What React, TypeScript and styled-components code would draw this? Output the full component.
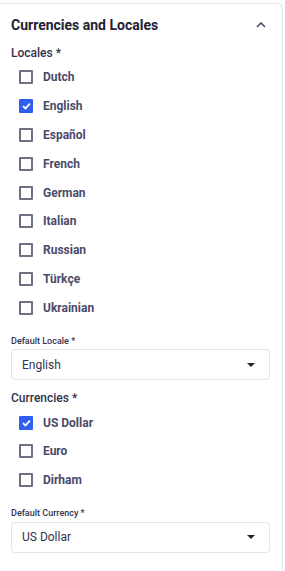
import React, { useState } from 'react'
import styled, { createGlobalStyle } from 'styled-components'

const GlobalStyle = createGlobalStyle`
  html, body {
    margin: 0;
    padding: 0;
    background: #ffffff;
    font-family: Roboto, 'Noto Sans', sans-serif;
    overflow: hidden;
  }
`

const Page = styled.div`
  padding: 3px 2px 0 0;
  margin-left: -10px;
`

const Card = styled.section`
  border: 1px solid #e3e3e6;
  border-bottom: none;
  border-radius: 0 6px 0 0;
  padding: 10px 12px 30px 20px;
  background: #fff;
`

const Header = styled.div`
  display: flex;
  align-items: center;
  justify-content: space-between;
  height: 22px;
  margin-bottom: 9px;
`

const Title = styled.h2`
  margin: 0;
  font-size: 14px;
  font-weight: 700;
  color: #212134;
`

const Toggle = styled.button`
  border: none;
  background: none;
  padding: 0;
  width: 16px;
  height: 16px;
  display: flex;
  align-items: center;
  justify-content: center;
  margin-right: 1px;
  cursor: pointer;
`

const GroupLabel = styled.div`
  font-size: 12px;
  font-weight: 500;
  color: #32324d;
  height: 16px;
  line-height: 16px;
`

const CheckList = styled.div`
  display: flex;
  flex-direction: column;
  padding: 2px 0 0 8px;
`

const CheckRow = styled.label`
  display: flex;
  align-items: center;
  gap: 10px;
  height: 28.8px;
  cursor: pointer;
`

const Box = styled.span<{ $checked: boolean }>`
  width: 14px;
  height: 14px;
  box-sizing: border-box;
  border-radius: 1px;
  border: ${(p) => (p.$checked ? 'none' : '2px solid #6e6e84')};
  background: ${(p) => (p.$checked ? '#2e5ff0' : '#fff')};
  display: flex;
  align-items: center;
  justify-content: center;
`

const CheckText = styled.span`
  font-size: 12px;
  font-weight: 700;
  color: #4a4a6a;
`

const FieldLabel = styled.div`
  font-size: 9px;
  font-weight: 500;
  color: #32324d;
  margin-top: 12px;
  margin-bottom: 3px;
`

const SelectBox = styled.div`
  height: 31px;
  box-sizing: border-box;
  border: 1px solid #e3e3e8;
  border-radius: 4px;
  display: flex;
  align-items: center;
  justify-content: space-between;
  padding: 0 14px 0 10px;
  font-size: 12px;
  color: #32324d;
`

const Caret = styled.span`
  width: 0;
  height: 0;
  border-left: 4px solid transparent;
  border-right: 4px solid transparent;
  border-top: 4px solid #212134;
`

const Spacer = styled.div<{ $h: number }>`
  height: ${(p) => p.$h}px;
`

const locales = ['Dutch', 'English', 'Español', 'French', 'German', 'Italian', 'Russian', 'Türkçe', 'Ukrainian']
const currencies = ['US Dollar', 'Euro', 'Dirham']

function Check({ label, checked, onToggle }: { label: string; checked: boolean; onToggle: () => void }) {
  return (
    <CheckRow onClick={onToggle}>
      <Box $checked={checked}>
        {checked && (
          <svg width='9' height='8' viewBox='0 0 9 8'>
            <path d='M1 4.2 L3.4 6.4 L8 1.6' stroke='#fff' strokeWidth='1.8' fill='none' />
          </svg>
        )}
      </Box>
      <CheckText>{label}</CheckText>
    </CheckRow>
  )
}

export default function App() {
  const [selLocales, setSelLocales] = useState<string[]>(['English'])
  const [selCurrencies, setSelCurrencies] = useState<string[]>(['US Dollar'])

  const flip = (list: string[], set: (v: string[]) => void, v: string) =>
    set(list.includes(v) ? list.filter((x) => x !== v) : [...list, v])

  return (
    <>
      <GlobalStyle />
      <Page>
        <Card>
          <Header>
            <Title>Currencies and Locales</Title>
            <Toggle aria-label='collapse'>
              <svg width='10' height='6' viewBox='0 0 10 6'>
                <path d='M1 5 L5 1 L9 5' stroke='#4a4a6a' strokeWidth='1.6' fill='none' />
              </svg>
            </Toggle>
          </Header>

          <GroupLabel>Locales *</GroupLabel>
          <CheckList>
            {locales.map((l) => (
              <Check key={l} label={l} checked={selLocales.includes(l)} onToggle={() => flip(selLocales, setSelLocales, l)} />
            ))}
          </CheckList>

          <Spacer $h={2} />
          <FieldLabel>Default Locale *</FieldLabel>
          <SelectBox>
            English
            <Caret />
          </SelectBox>

          <Spacer $h={10} />
          <GroupLabel>Currencies *</GroupLabel>
          <CheckList>
            {currencies.map((c) => (
              <Check key={c} label={c} checked={selCurrencies.includes(c)} onToggle={() => flip(selCurrencies, setSelCurrencies, c)} />
            ))}
          </CheckList>

          <Spacer $h={1} />
          <FieldLabel>Default Currency *</FieldLabel>
          <Spacer $h={1} />
          <SelectBox>
            US Dollar
            <Caret />
          </SelectBox>
        </Card>
      </Page>
    </>
  )
}
